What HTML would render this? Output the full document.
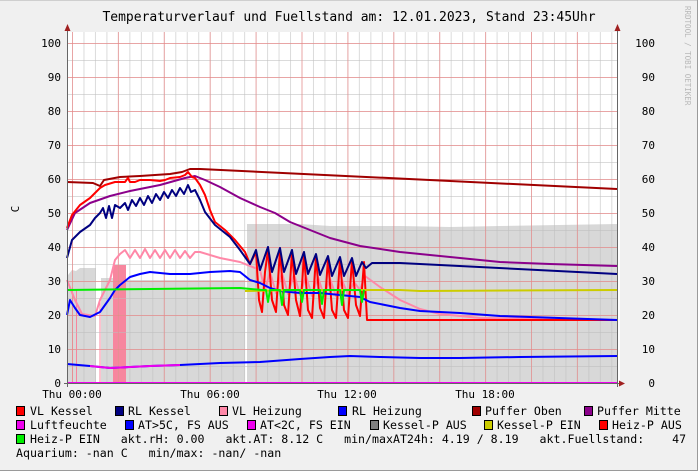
<!DOCTYPE html>
<html><head><meta charset="utf-8"><style>
html,body{margin:0;padding:0;background:#f0f0f0;}
svg{display:block;font-family:"DejaVu Sans Mono","Liberation Mono",monospace;}
text{white-space:pre;}
</style></head><body>
<svg width="698" height="471" viewBox="0 0 698 471" xmlns="http://www.w3.org/2000/svg">
<defs>
<pattern id="vmin" patternUnits="userSpaceOnUse" x="72" y="0" width="11.475" height="471"><line x1="0.5" y1="0" x2="0.5" y2="471" stroke="#bdbdbd" stroke-opacity="0.55" stroke-width="1"/></pattern>
<pattern id="vmaj" patternUnits="userSpaceOnUse" x="72" y="0" width="45.9" height="471"><line x1="0.5" y1="0" x2="0.5" y2="471" stroke="#f08080" stroke-opacity="0.6" stroke-width="1"/></pattern>
<pattern id="hmin" patternUnits="userSpaceOnUse" x="0" y="26" width="698" height="17"><line x1="0" y1="0.5" x2="698" y2="0.5" stroke="#bdbdbd" stroke-opacity="0.55" stroke-width="1"/></pattern>
<pattern id="hmaj" patternUnits="userSpaceOnUse" x="0" y="43" width="698" height="34"><line x1="0" y1="0.5" x2="698" y2="0.5" stroke="#f08080" stroke-opacity="0.6" stroke-width="1"/></pattern>
</defs>
<rect x="0" y="0" width="698" height="471" fill="#f0f0f0"/>
<line x1="0" y1="0.5" x2="698" y2="0.5" stroke="#cfcfcf"/>
<line x1="697.5" y1="0" x2="697.5" y2="471" stroke="#9a9a9a"/>
<line x1="0" y1="470.5" x2="698" y2="470.5" stroke="#9a9a9a"/>
<text x="349" y="21" font-size="13" text-anchor="middle" fill="#000">Temperaturverlauf und Fuellstand am: 12.01.2023, Stand 23:45Uhr</text>
<text transform="translate(685,6) rotate(90)" font-size="7.5" fill="#b8b8b8">RRDTOOL / TOBI OETIKER</text>
<text transform="translate(19,209) rotate(-90)" font-size="11" fill="#000" text-anchor="middle">C</text>

<rect x="67" y="32" width="553" height="351" fill="#fff"/>
<path d="M68,383 L68,275 L72,270 L76,271 L80,268 L96,268 L96,383 Z" fill="#d8d8d8"/>
<path d="M101,383 L101,278 L113,278 L113,383 Z" fill="#d8d8d8"/>
<path d="M126,383 L126,280 L245,280 L245,383 Z" fill="#d8d8d8"/>
<path d="M247,383 L247,224 L300,224 L330,226 L400,226 L450,227 L500,226 L617,224 L617,383 Z" fill="#d8d8d8"/>
<rect x="113" y="265" width="13" height="118" fill="#f7869e"/>
<line x1="72.5" y1="287" x2="72.5" y2="383" stroke="#f7869e"/>
<line x1="76.5" y1="290" x2="76.5" y2="383" stroke="#f7869e"/>
<line x1="100" y1="300" x2="100" y2="383" stroke="#f7869e"/>
<rect x="67" y="32" width="550" height="351" fill="url(#vmin)"/>
<rect x="67" y="32" width="550" height="351" fill="url(#hmin)"/>
<rect x="67" y="32" width="550" height="351" fill="url(#vmaj)"/>
<rect x="67" y="32" width="550" height="351" fill="url(#hmaj)"/>

<g fill="none" stroke-width="2" stroke-linejoin="round">
<polyline stroke="#a00000" points="67,182 93,183 100,186 104,180 120,177 140,176 170,174 182,172 190,169 200,169 617,189"/>
<polyline stroke="#8b008b" points="67,230 75,213 90,203 110,196 130,191 160,185 185,178 195,176 205,180 220,187 240,198 260,207 275,213 290,222 310,230 330,238 360,246 400,252 450,257 500,262 550,264 617,266"/>
<polyline stroke="#ff88a8" points="67,280 75,300 82,314 95,316 100,300 105,290 110,280 115,260 120,254 125,250 130,258 135,250 140,258 145,249 150,258 155,250 160,258 165,250 170,258 175,250 180,258 185,251 190,258 195,252 200,252 220,258 240,262 260,270 265,290 270,272 276,293 282,273 288,294 294,274 300,295 306,276 312,296 318,277 324,296 330,279 336,296 342,280 348,295 354,282 360,290 365,276 380,287 400,300 420,309 440,314 480,318 617,320"/>
<polyline stroke="#ff0000" points="67,228 72,215 80,205 90,198 100,188 105,185 115,182 125,182 128,178 130,182 135,182 140,180 150,180 160,181 165,180 170,178 180,177 185,175 188,172 192,177 195,178 200,185 205,195 210,210 215,222 225,230 235,240 245,252 250,264 256,252 259,300 262,312 265,272 268,250 272,300 276,312 280,250 284,305 288,315 292,252 296,300 300,316 304,254 308,310 312,318 316,256 320,308 324,318 328,258 332,310 336,318 340,259 344,310 348,318 352,260 356,305 360,316 364,262 367,320 617,320"/>
<polyline stroke="#000080" points="67,258 72,240 80,232 90,225 95,218 100,213 103,208 106,218 109,206 112,218 115,205 120,208 125,203 128,210 132,200 136,206 140,198 144,205 148,196 152,203 156,194 160,200 164,192 168,198 172,190 176,196 180,188 184,194 188,185 191,192 195,190 200,200 205,212 215,225 230,237 240,250 250,264 256,250 260,270 268,247 272,272 280,248 284,272 292,250 296,274 304,252 308,274 316,254 320,275 328,256 332,276 340,257 344,276 352,258 356,276 362,262 366,268 372,263 400,263 617,274"/>
<polyline stroke="#0000ff" points="67,315 70,300 75,308 80,315 90,317 100,312 105,305 110,298 115,290 120,285 130,277 140,274 150,272 170,274 190,274 210,272 230,271 240,272 250,280 260,283 270,288 280,291 300,293 320,293 340,295 360,297 370,302 385,305 400,308 420,311 460,313 500,316 617,320"/>
<polyline stroke="#cccc00" points="245,291 300,290 400,290 420,291 617,290"/>
<polyline stroke="#00ee00" points="67,290 150,289 240,288 262,290 266,290 268,302 270,290 280,290 282,305 284,290 300,290 302,302 304,290 320,290 322,304 324,290 340,290 342,305 344,290 360,290 362,302 364,290"/>
<polyline stroke="#0000ff" points="67,364 90,366 110,368 130,367 150,366 180,365 220,363 260,362 300,359 330,357 350,356 380,357 420,358 460,358 520,357 617,356"/>
<polyline stroke="#ee00ee" points="90,366 110,368 130,367 150,366 180,365"/>
<line x1="67" y1="383" x2="617" y2="383" stroke="#ee00ee"/>
</g>

<line x1="67.5" y1="30" x2="67.5" y2="387" stroke="#666"/>
<line x1="617.5" y1="30" x2="617.5" y2="387" stroke="#666"/>
<line x1="64" y1="383.5" x2="620" y2="383.5" stroke="#666"/>
<path d="M67.5,24 L64.5,31 L70.5,31 Z" fill="#a02020"/>
<path d="M617.5,24 L614.5,31 L620.5,31 Z" fill="#a02020"/>
<path d="M625,383.5 L619,380.5 L619,386.5 Z" fill="#a02020"/>

<g font-size="11" fill="#000">
<g text-anchor="end">
<text x="61" y="47">100</text><text x="61" y="81">90</text><text x="61" y="115">80</text><text x="61" y="149">70</text><text x="61" y="183">60</text><text x="61" y="217">50</text><text x="61" y="251">40</text><text x="61" y="285">30</text><text x="61" y="319">20</text><text x="61" y="353">10</text><text x="61" y="387">0</text>
<text x="655" y="47">100</text><text x="655" y="81">90</text><text x="655" y="115">80</text><text x="655" y="149">70</text><text x="655" y="183">60</text><text x="655" y="217">50</text><text x="655" y="251">40</text><text x="655" y="285">30</text><text x="655" y="319">20</text><text x="655" y="353">10</text><text x="655" y="387">0</text>
</g>
<g text-anchor="middle">
<text x="72" y="398">Thu 00:00</text><text x="210" y="398">Thu 06:00</text><text x="347" y="398">Thu 12:00</text><text x="485" y="398">Thu 18:00</text>
</g>
</g>

<g stroke="#000" stroke-width="1">
<rect x="16.5" y="406.5" width="8" height="9" fill="#ff0000"/>
<rect x="115.5" y="406.5" width="8" height="9" fill="#000080"/>
<rect x="219.5" y="406.5" width="8" height="9" fill="#ff88a8"/>
<rect x="338.5" y="406.5" width="8" height="9" fill="#0000ff"/>
<rect x="472.5" y="406.5" width="8" height="9" fill="#a00000"/>
<rect x="584.5" y="406.5" width="8" height="9" fill="#8b008b"/>
<rect x="16.5" y="420.5" width="8" height="9" fill="#ee00ee"/>
<rect x="125.5" y="420.5" width="8" height="9" fill="#0000ff"/>
<rect x="247.5" y="420.5" width="8" height="9" fill="#ee00ee"/>
<rect x="370.5" y="420.5" width="8" height="9" fill="#808080"/>
<rect x="484.5" y="420.5" width="8" height="9" fill="#cccc00"/>
<rect x="599.5" y="420.5" width="8" height="9" fill="#ff0000"/>
<rect x="16.5" y="434.5" width="8" height="9" fill="#00ee00"/>
</g>
<g font-size="11.6" fill="#000">
<text x="30" y="415">VL Kessel</text>
<text x="128" y="415">RL Kessel</text>
<text x="232" y="415">VL Heizung</text>
<text x="352" y="415">RL Heizung</text>
<text x="485" y="415">Puffer Oben</text>
<text x="597" y="415">Puffer Mitte</text>
<text x="30" y="429">Luftfeuchte</text>
<text x="138" y="429">AT&gt;5C, FS AUS</text>
<text x="260" y="429">AT&lt;2C, FS EIN</text>
<text x="383" y="429">Kessel-P AUS</text>
<text x="497" y="429">Kessel-P EIN</text>
<text x="612" y="429">Heiz-P AUS</text>
<text x="30" y="443">Heiz-P EIN   akt.rH: 0.00   akt.AT: 8.12 C   min/maxAT24h: 4.19 / 8.19   akt.Fuellstand:    47</text>
<text x="16" y="457">Aquarium: -nan C   min/max: -nan/ -nan</text>
</g>
</svg>
</body></html>
